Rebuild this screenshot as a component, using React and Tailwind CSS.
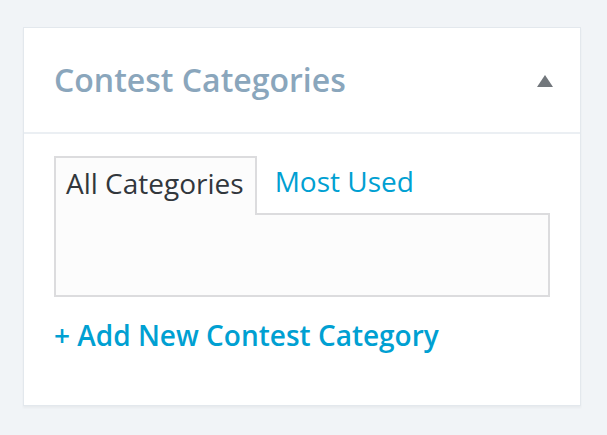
import React, { useState } from 'react';

const font = { fontFamily: '"Open Sans", "Noto Sans", sans-serif' };

const App = () => {
  const [tab, setTab] = useState('all');
  const [open, setOpen] = useState(true);

  return (
    <div className="min-h-screen bg-[#f1f4f7] pt-[27px] pl-[23px]" style={font}>
      <div className="w-[558px] h-[379px] bg-white border border-[#e3e8ed] shadow-[0_2px_2px_rgba(0,0,0,0.04)]">
        <div className="flex items-center justify-between h-[106px] pl-[30px] pr-[27px] border-b-2 border-[#ebeff3]">
          <h2 className="text-[32px] font-semibold text-[#8aa6bc] leading-none">Contest Categories</h2>
          <button onClick={() => setOpen(!open)} className="w-4 h-3 mt-[2px]">
            <svg width="16" height="12" viewBox="0 0 16 12">
              <path d="M8 0 L16 12 L0 12 Z" fill="#72777c" />
            </svg>
          </button>
        </div>

        <div className="pt-[22px] px-[30px]">
          <ul className="flex items-end text-[28px] leading-[1.35]">
            <li
              onClick={() => setTab('all')}
              className={`relative z-10 -mb-[2px] h-[59px] pl-[10px] pr-[11px] pt-[7px] cursor-pointer ${tab === 'all' ? 'border-2 border-b-0 border-[#dcdcde] bg-[#fcfcfc] text-[#32373c]' : 'text-[#00a0d2]'}`}
            >
              All Categories
            </li>
            <li
              onClick={() => setTab('used')}
              className={`relative z-10 -mb-[2px] h-[59px] pl-[18px] pr-[11px] pt-[7px] cursor-pointer ${tab === 'used' ? 'border-2 border-b-0 border-[#dcdcde] bg-[#fcfcfc] text-[#32373c]' : 'text-[#00a0d2]'}`}
            >
              Most Used
            </li>
          </ul>
          <div className="h-[84px] border-2 border-[#dcdcde] bg-[#fcfcfc]" />

          <a href="#" className="block mt-[20px] text-[28px] font-semibold text-[#00a0d2] leading-[1.35]">
            + Add New Contest Category
          </a>
        </div>
      </div>
    </div>
  );
};

export default App;
